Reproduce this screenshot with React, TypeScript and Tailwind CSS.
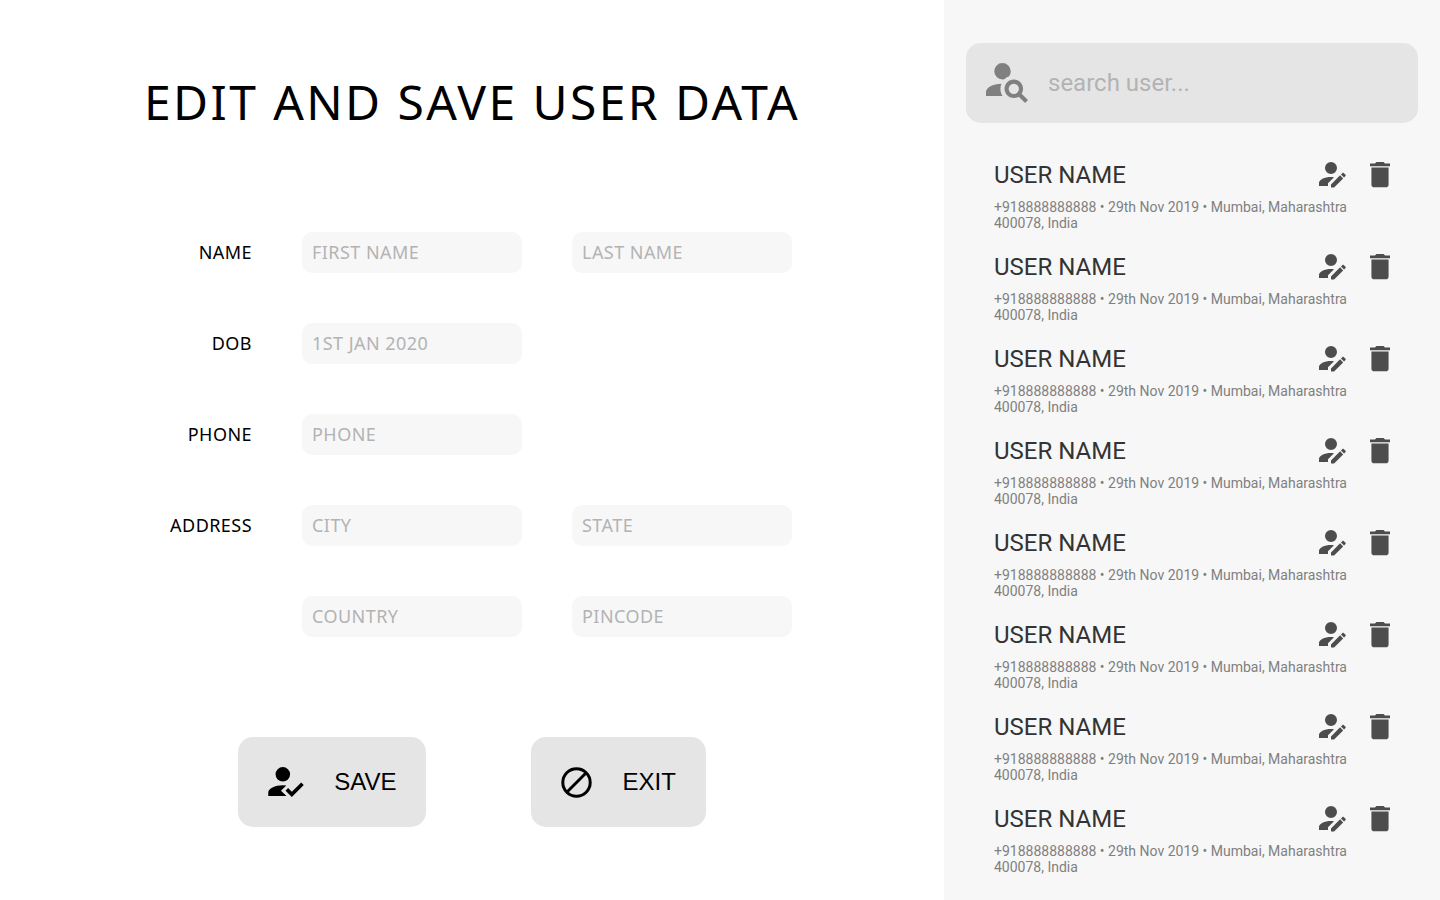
import React from 'react';

type Field = { id: string; placeholder: string; label: string };
type Row = { label: string; fields: Field[] };

const rows: Row[] = [
  {
    label: 'NAME',
    fields: [
      { id: 'first-name', placeholder: 'FIRST NAME', label: 'First name' },
      { id: 'last-name', placeholder: 'LAST NAME', label: 'Last name' },
    ],
  },
  { label: 'DOB', fields: [{ id: 'dob', placeholder: '1ST JAN 2020', label: 'Date of birth' }] },
  { label: 'PHONE', fields: [{ id: 'phone', placeholder: 'PHONE', label: 'Phone' }] },
  {
    label: 'ADDRESS',
    fields: [
      { id: 'city', placeholder: 'CITY', label: 'City' },
      { id: 'state', placeholder: 'STATE', label: 'State' },
    ],
  },
  {
    label: '',
    fields: [
      { id: 'country', placeholder: 'COUNTRY', label: 'Country' },
      { id: 'pincode', placeholder: 'PINCODE', label: 'Pincode' },
    ],
  },
];

const users = Array.from({ length: 8 }, (_, id) => ({
  id,
  name: 'USER NAME',
  details: '+918888888888 • 29th Nov 2019 • Mumbai, Maharashtra 400078, India',
}));

function AccountSearchIcon() {
  return (
    <svg viewBox="2 4 20.39 19.39" className="h-10 w-[42px] shrink-0 fill-[#808080]" aria-hidden="true">
      <path d="M15.5,12C18,12 20,14 20,16.5C20,17.38 19.75,18.21 19.31,18.9L22.39,22L21,23.39L17.88,20.32C17.19,20.75 16.37,21 15.5,21C13,21 11,19 11,16.5C11,14 13,12 15.5,12M15.5,14A2.5,2.5 0 0,0 13,16.5A2.5,2.5 0 0,0 15.5,19A2.5,2.5 0 0,0 18,16.5A2.5,2.5 0 0,0 15.5,14M10,4A4,4 0 0,1 14,8C14,8.91 13.69,9.75 13.18,10.43C12.32,10.75 11.55,11.26 10.91,11.9L10,12A4,4 0 0,1 6,8A4,4 0 0,1 10,4M2,20V18C2,15.88 5.31,14.14 9.5,14C9.18,14.78 9,15.62 9,16.5C9,17.79 9.38,19 10,20H2Z" />
    </svg>
  );
}

function AccountEditIcon() {
  return (
    <svg viewBox="4 4 18 17.33" className="h-[26px] w-[27px] fill-[#4d4d4d]" aria-hidden="true">
      <path d="M21.7,13.35L20.7,14.35L18.65,12.3L19.65,11.3C19.86,11.08 20.21,11.08 20.42,11.3L21.7,12.58C21.92,12.79 21.92,13.14 21.7,13.35M12,18.94L18.06,12.88L20.11,14.93L14.06,21H12V18.94M12,14C7.58,14 4,15.79 4,18V20H10V18.11L14,14.11C13.34,14.03 12.67,14 12,14M12,4A4,4 0 0,0 8,8A4,4 0 0,0 12,12A4,4 0 0,0 16,8A4,4 0 0,0 12,4Z" />
    </svg>
  );
}

function DeleteIcon() {
  return (
    <svg viewBox="5 3 14 18.5" preserveAspectRatio="none" className="h-[26px] w-5 fill-[#4d4d4d]" aria-hidden="true">
      <path d="M19,4H15.5L14.5,3H9.5L8.5,4H5V6H19M6,19A2,2 0 0,0 8,21H16A2,2 0 0,0 18,19V7H6V19Z" />
    </svg>
  );
}

function AccountCheckIcon() {
  return (
    <svg viewBox="3 4 19.5 16.5" className="h-[30px] w-9 fill-black" aria-hidden="true">
      <path d="M21.1,12.5L22.5,13.91L15.97,20.5L12.5,17L13.9,15.59L15.97,17.67L21.1,12.5M10,17L13,20H3V18C3,15.79 6.58,14 11,14L12.89,14.11L10,17M11,4A4,4 0 0,1 15,8A4,4 0 0,1 11,12A4,4 0 0,1 7,8A4,4 0 0,1 11,4Z" />
    </svg>
  );
}

function CancelIcon() {
  return (
    <svg viewBox="0 0 31 31" className="size-[31px] fill-none stroke-black" strokeWidth="3" aria-hidden="true">
      <circle cx="15.5" cy="15.5" r="13.7" />
      <path d="M5.8 25.2L25.2 5.8" />
    </svg>
  );
}

function ActionButton({ icon, children }: { icon: React.ReactNode; children: React.ReactNode }) {
  return (
    <button
      type="button"
      className="flex h-[90px] items-center gap-[30px] rounded-[15px] bg-[#e5e5e5] px-[30px] font-['Liberation_Sans',sans-serif] text-2xl text-black"
    >
      {icon}
      {children}
    </button>
  );
}

export default function App() {
  return (
    <div className="flex min-h-screen bg-white">
      <main className="flex flex-1 flex-col items-center pt-[69px] font-['Noto_Sans',sans-serif]">
        <h1 className="text-5xl leading-[66px] tracking-wider text-black">EDIT AND SAVE USER DATA</h1>
        <form className="mt-[97px] flex flex-col items-center gap-[100px]">
          <div className="flex flex-col gap-[50px]">
            {rows.map((row) => (
              <div key={row.fields[0].id} className="grid grid-cols-[100px_220px_220px] items-center gap-x-[50px]">
                {row.label ? (
                  <label htmlFor={row.fields[0].id} className="pb-[2px] text-right text-lg leading-6 tracking-wide text-black">
                    {row.label}
                  </label>
                ) : (
                  <span />
                )}
                {row.fields.map((field) => (
                  <input
                    key={field.id}
                    id={field.id}
                    type="text"
                    aria-label={field.label}
                    placeholder={field.placeholder}
                    className="h-[41px] w-full rounded-[10px] bg-[#f7f7f7] px-[10px] pb-[2px] text-lg leading-6 tracking-wide text-black placeholder:text-[#b3b3b3]"
                  />
                ))}
              </div>
            ))}
          </div>
          <div className="flex gap-[105px]">
            <ActionButton icon={<AccountCheckIcon />}>SAVE</ActionButton>
            <ActionButton icon={<CancelIcon />}>EXIT</ActionButton>
          </div>
        </form>
      </main>

      <aside className="w-[496px] shrink-0 bg-[#f7f7f7] px-[22px] pt-[43px] font-['Roboto',sans-serif]">
        <div className="flex h-20 items-center gap-5 rounded-[15px] bg-[#e5e5e5] px-5">
          <AccountSearchIcon />
          <input
            type="search"
            aria-label="Search user"
            placeholder="search user..."
            className="min-w-0 flex-1 bg-transparent text-2xl text-[#333333] placeholder:text-[#b3b3b3]"
          />
        </div>
        <ul className="mt-[38px] flex flex-col gap-[22px] px-7">
          {users.map((user) => (
            <li key={user.id}>
              <div className="flex items-center justify-between">
                <h2 className="text-2xl leading-7 text-[#333333]">{user.name}</h2>
                <div className="flex items-center gap-6">
                  <button type="button" aria-label="Edit user">
                    <AccountEditIcon />
                  </button>
                  <button type="button" aria-label="Delete user">
                    <DeleteIcon />
                  </button>
                </div>
              </div>
              <p className="mt-[10px] text-sm leading-4 text-[#808080]">{user.details}</p>
            </li>
          ))}
        </ul>
      </aside>
    </div>
  );
}
